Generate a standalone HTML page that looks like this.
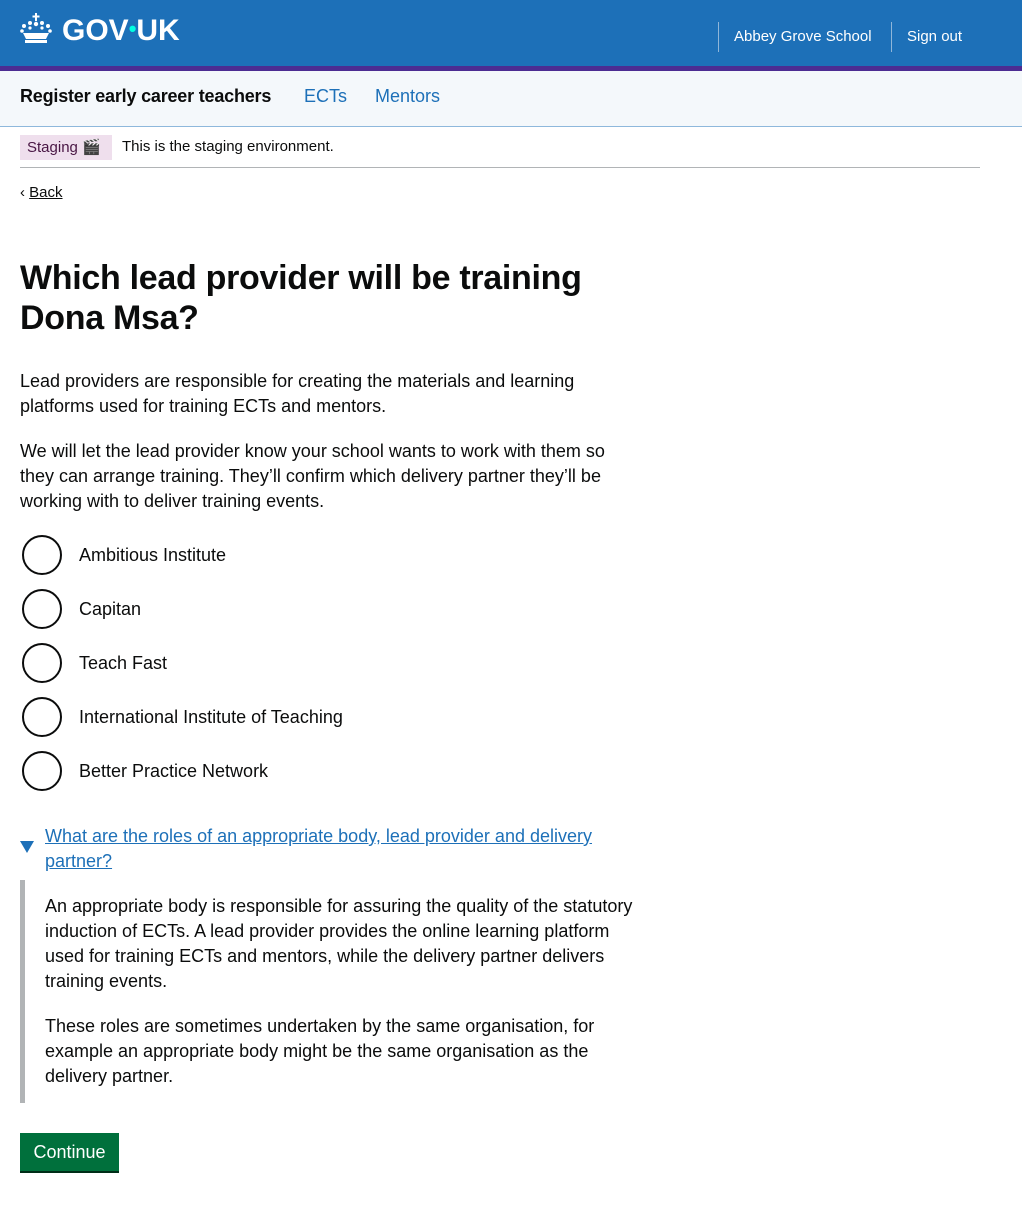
<!DOCTYPE html>
<html><head><meta charset="utf-8"><style>
*{box-sizing:border-box;margin:0;padding:0}
body{width:1022px;height:1213px;font-family:"Liberation Sans",sans-serif;color:#0b0c0c;background:#fff;position:relative;overflow:hidden}
.hdr{position:absolute;left:0;top:0;width:1022px;height:66px;background:#1d70b8}
.pur{position:absolute;left:0;top:66px;width:1022px;height:5px;background:#4c2c92}
.svc{position:absolute;left:0;top:71px;width:1022px;height:56px;background:#f4f8fb;border-bottom:1px solid #8eb8dc}
.a{position:absolute;white-space:nowrap}
p.t{position:absolute;left:20px;font-size:18px;line-height:25px;width:630px}
.rad{position:absolute;left:22px;width:40px;height:40px;border:2px solid #0b0c0c;border-radius:50%}
.rl{position:absolute;left:79px;font-size:18px;line-height:25px}
</style></head><body>
<div class="hdr"></div>
<svg class="a" style="left:20px;top:13px" width="32" height="31" viewBox="0 0 32 31" fill="#fff">
<rect x="15" y="0" width="2" height="8"/><rect x="12.5" y="2.5" width="7" height="2"/>
<circle cx="16" cy="11" r="2.2"/><circle cx="10" cy="10" r="2"/><circle cx="22" cy="10" r="2"/>
<circle cx="4" cy="13" r="2"/><circle cx="28" cy="13" r="2"/><circle cx="2" cy="18" r="1.8"/><circle cx="30" cy="18" r="1.8"/>
<circle cx="10" cy="15" r="1.6"/><circle cx="22" cy="15" r="1.6"/>
<path d="M3 20 L29 20 L26 26 L6 26 Z"/><rect x="5" y="27" width="22" height="3"/></svg>
<div class="a" style="left:62px;top:12px;color:#fff;font-weight:bold;font-size:30px;line-height:38px">GOV<span style="color:#00ffe0;font-size:22px;position:relative;top:-4px">•</span>UK</div>
<div class="a" style="left:718px;top:22px;width:1px;height:30px;background:#8fb6d9"></div>
<div class="a" style="left:734px;top:28px;color:#fff;font-size:15px">Abbey Grove School</div>
<div class="a" style="left:891px;top:22px;width:1px;height:30px;background:#8fb6d9"></div>
<div class="a" style="left:907px;top:28px;color:#fff;font-size:15px">Sign out</div>
<div class="pur"></div>
<div class="svc"></div>
<div class="a" style="left:20px;top:86px;font-size:18px;font-weight:bold;letter-spacing:-0.2px">Register early career teachers</div>
<div class="a" style="left:304px;top:86px;font-size:18px;color:#1d70b8">ECTs</div>
<div class="a" style="left:375px;top:86px;font-size:18px;color:#1d70b8">Mentors</div>
<div class="a" style="left:20px;top:135px;width:92px;height:25px;background:#efdfed"></div>
<div class="a" style="left:27px;top:138px;font-size:15px;color:#491644">Staging 🎬</div>
<div class="a" style="left:122px;top:138px;font-size:15px">This is the staging environment.</div>
<div class="a" style="left:20px;top:167px;width:960px;height:1px;background:#b1b4b6"></div>
<div class="a" style="left:20px;top:184px;font-size:15px">‹ <span style="text-decoration:underline">Back</span></div>
<h1 class="a" style="left:20px;top:258px;font-size:34px;line-height:40px;font-weight:bold;white-space:normal;width:640px;letter-spacing:-0.3px">Which lead provider will be training Dona Msa?</h1>
<p class="t" style="top:369px;width:600px">Lead providers are responsible for creating the materials and learning platforms used for training ECTs and mentors.</p>
<p class="t" style="top:439px;width:610px">We will let the lead provider know your school wants to work with them so they can arrange training. They’ll confirm which delivery partner they’ll be working with to deliver training events.</p>
<div class="rad" style="top:535px"></div><div class="rl" style="top:543px">Ambitious Institute</div>
<div class="rad" style="top:589px"></div><div class="rl" style="top:597px">Capitan</div>
<div class="rad" style="top:643px"></div><div class="rl" style="top:651px">Teach Fast</div>
<div class="rad" style="top:697px"></div><div class="rl" style="top:705px">International Institute of Teaching</div>
<div class="rad" style="top:751px"></div><div class="rl" style="top:759px">Better Practice Network</div>
<svg class="a" style="left:20px;top:841px" width="14" height="12"><path d="M0 0H14L7 12Z" fill="#1d70b8"/></svg>
<p class="t" style="left:45px;top:824px;width:580px;color:#1d70b8;text-decoration:underline">What are the roles of an appropriate body, lead provider and delivery partner?</p>
<div class="a" style="left:20px;top:880px;width:5px;height:223px;background:#b1b4b6"></div>
<p class="t" style="left:45px;top:894px;width:600px">An appropriate body is responsible for assuring the quality of the statutory induction of ECTs. A lead provider provides the online learning platform used for training ECTs and mentors, while the delivery partner delivers training events.</p>
<p class="t" style="left:45px;top:1014px;width:580px">These roles are sometimes undertaken by the same organisation, for example an appropriate body might be the same organisation as the delivery partner.</p>
<div class="a" style="left:20px;top:1133px;width:99px;height:38px;background:#00703c;box-shadow:0 2px 0 #002d18;color:#fff;font-size:18px;line-height:38px;text-align:center">Continue</div>
</body></html>
